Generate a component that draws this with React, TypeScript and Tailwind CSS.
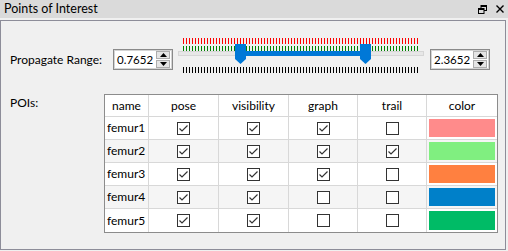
import React from "react";

const font = { fontFamily: 'Lato, "Noto Sans", "Liberation Sans", sans-serif' };

function Spin({ value }: { value: string }) {
  return (
    <div className="flex h-[21px] w-[60px] items-stretch border border-[#8a8a8a] bg-white shadow-[inset_0_0_0_1px_#d4d4d4]">
      <div className="flex flex-1 items-center pl-[3px] text-[11.5px] leading-none text-black">{value}</div>
      <div className="my-[1px] mr-[2px] flex w-[14px] flex-col gap-[1px]">
        <div className="flex flex-1 items-center justify-center border border-[#adadad] bg-[#e5e5e5]">
          <svg width="7" height="4" viewBox="0 0 7 4"><polygon points="3.5,0 7,4 0,4" fill="#000" /></svg>
        </div>
        <div className="flex flex-1 items-center justify-center border border-[#adadad] bg-[#e5e5e5]">
          <svg width="7" height="4" viewBox="0 0 7 4"><polygon points="0,0 7,0 3.5,4" fill="#000" /></svg>
        </div>
      </div>
    </div>
  );
}

function Slider() {
  const ticks: number[] = [];
  for (let x = 5; x <= 240; x += 3) ticks.push(x);
  const handle = (x: number) => (
    <path d={`M${x} 7 H${x + 11} V22 L${x + 5.5} 27 L${x} 22 Z`} fill="#0078d7" />
  );
  return (
    <svg width="246" height="37" viewBox="0 0 246 37" className="block">
      {ticks.map((x) => (
        <rect key={"r" + x} x={x} y={1} width={1} height={6} fill="#ff0000" />
      ))}
      {ticks.map((x) => (
        <rect key={"g" + x} x={x} y={9} width={1} height={5} fill="#008000" />
      ))}
      <rect x={0.5} y={14.5} width={245} height={4} fill="#e7e7e7" stroke="#d6d6d6" />
      <rect x={62} y={14} width={126} height={5} fill="#0078d7" />
      {handle(57)}
      {handle(182)}
      {ticks.map((x) => (
        <rect key={"b" + x} x={x} y={30} width={1} height={6} fill="#000" />
      ))}
    </svg>
  );
}

function Check({ on }: { on: boolean }) {
  return (
    <svg width="13" height="13" viewBox="0 0 13 13" className="block">
      <rect x="0.5" y="0.5" width="12" height="12" fill="#fff" stroke="#333" />
      {on && <polyline points="2.5,6.5 5,9 10.5,3.5" fill="none" stroke="#333" strokeWidth="1.2" />}
    </svg>
  );
}

const rows = [
  { name: "femur1", c: [true, true, true, false], color: "#ff8b8b" },
  { name: "femur2", c: [true, true, true, true], color: "#80ef80" },
  { name: "femur3", c: [true, true, true, false], color: "#ff8040" },
  { name: "femur4", c: [true, true, false, false], color: "#0080c9" },
  { name: "femur5", c: [true, true, false, false], color: "#00bb66" },
];

const widths = ["w-[70px]", "w-[70px]", "w-[69px]", "w-[69px]"];

export default function App() {
  return (
    <div className="flex h-[251px] w-[508px] flex-col bg-[#f0f0f0] text-black" style={font}>
      <div className="flex h-[18px] items-center justify-between bg-[#dadada] pl-[4px] pr-[4px]">
        <span className="text-[12.5px] leading-none text-[#000]">Points of Interest</span>
        <div className="flex items-center gap-[9px]">
          <svg width="9" height="9" viewBox="0 0 9 9">
            <rect x="3" y="0.5" width="5.5" height="5" fill="none" stroke="#000" />
            <rect x="3" y="0" width="6" height="2" fill="#000" />
            <rect x="0.5" y="3.5" width="5.5" height="5" fill="#dadada" stroke="#000" />
            <rect x="0" y="3" width="6" height="2" fill="#000" />
          </svg>
          <svg width="8" height="8" viewBox="0 0 8 8">
            <path d="M0.5 0.5 L7.5 7.5 M7.5 0.5 L0.5 7.5" stroke="#000" strokeWidth="1.4" />
          </svg>
        </div>
      </div>
      <div className="mb-[1px] mr-[2px] mt-[2px] flex flex-1 flex-col border border-[#8d8d99] pl-[9px]">
        <div className="mt-[16px] flex items-start">
          <div className="mt-[12px] flex h-[21px] w-[103px] items-center text-[12px]">Propagate Range:</div>
          <div className="mt-[12px]">
            <Spin value="0.7652" />
          </div>
          <div className="ml-[5px]">
            <Slider />
          </div>
          <div className="ml-[6px] mt-[12px]">
            <Spin value="2.3652" />
          </div>
        </div>
        <div className="mt-[20px] flex items-start">
          <div className="w-[94px] pt-[1px] text-[12px] leading-[16px]">POIs:</div>
          <div className="w-[394px] border border-[#8c8c8c] bg-white text-[12px]">
            <div className="flex h-[22px] border-b border-[#d8d8d8] bg-white">
              <div className="flex w-[44px] items-center justify-center border-r border-[#d8d8d8]">name</div>
              {["pose", "visibility", "graph", "trail"].map((h, i) => (
                <div key={h} className={`flex ${widths[i]} items-center justify-center border-r border-[#d8d8d8]`}>
                  {h}
                </div>
              ))}
              <div className="flex flex-1 items-center justify-center">color</div>
            </div>
            {rows.map((r, ri) => (
              <div
                key={r.name}
                className={`flex h-[23px] ${ri < 4 ? "border-b" : ""} border-[#d8d8d8] ${ri % 2 === 1 ? "bg-[#f5f5f5]" : "bg-white"}`}
              >
                <div className="flex w-[44px] items-center border-r border-[#d8d8d8] pl-[2px]">{r.name}</div>
                {r.c.map((on, i) => (
                  <div key={i} className={`flex ${widths[i]} items-center justify-center border-r border-[#d8d8d8]`}>
                    <Check on={on} />
                  </div>
                ))}
                <div className="flex flex-1 p-[2px] pl-[2px]">
                  <div className="flex-1" style={{ backgroundColor: r.color }} />
                </div>
              </div>
            ))}
          </div>
        </div>
      </div>
    </div>
  );
}
